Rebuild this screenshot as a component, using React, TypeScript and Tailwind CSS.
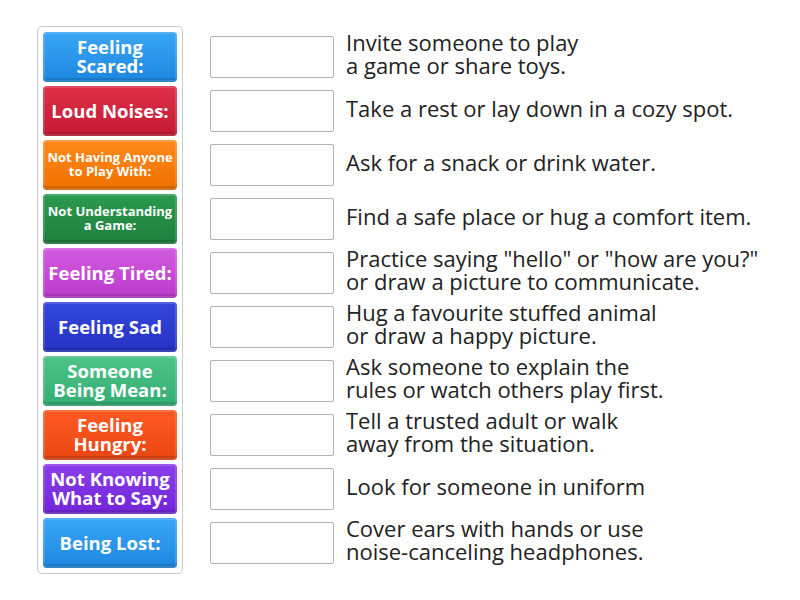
const items = [
  { label: ["Feeling", "Scared:"], size: "big", from: "#3aa6f5", to: "#1d87e0", text: ["Invite someone to play", "a game or share toys."] },
  { label: ["Loud Noises:"], size: "big", from: "#de3049", to: "#c41a33", text: ["Take a rest or lay down in a cozy spot."] },
  { label: ["Not Having Anyone", "to Play With:"], size: "small", from: "#ff8a1c", to: "#ef7000", text: ["Ask for a snack or drink water."] },
  { label: ["Not Understanding", "a Game:"], size: "small", from: "#2b9a4e", to: "#1d7f3d", text: ["Find a safe place or hug a comfort item."] },
  { label: ["Feeling Tired:"], size: "big", from: "#d25ce0", to: "#bb3acb", text: ["Practice saying \"hello\" or \"how are you?\"", "or draw a picture to communicate."] },
  { label: ["Feeling Sad"], size: "big", from: "#3547dc", to: "#2532c4", text: ["Hug a favourite stuffed animal", "or draw a happy picture."] },
  { label: ["Someone", "Being Mean:"], size: "big", from: "#4dc48a", to: "#33ad72", text: ["Ask someone to explain the", "rules or watch others play first."] },
  { label: ["Feeling", "Hungry:"], size: "big", from: "#ff5a24", to: "#e84612", text: ["Tell a trusted adult or walk", "away from the situation."] },
  { label: ["Not Knowing", "What to Say:"], size: "big", from: "#8b3eea", to: "#7225d8", text: ["Look for someone in uniform"] },
  { label: ["Being Lost:"], size: "big", from: "#3aa6f5", to: "#1d87e0", text: ["Cover ears with hands or use", "noise-canceling headphones."] },
];

function Tile({ item }: { item: (typeof items)[number] }) {
  return (
    <div
      className="h-[50px] w-[134px] rounded-[4px] flex flex-col items-center justify-center text-white font-bold text-center shadow-[inset_0_-4px_0_rgba(0,0,0,0.12),inset_0_0_0_2px_rgba(255,255,255,0.14)]"
      style={{ background: `linear-gradient(to bottom, ${item.from}, ${item.to})` }}
    >
      {item.label.map((l, i) => (
        <div
          key={i}
          className={item.size === "big" ? "text-[18.5px] leading-[21px] -mt-[2px]" : "text-[13px] leading-[15px] -mt-[1px] whitespace-nowrap"}
        >
          {l}
        </div>
      ))}
    </div>
  );
}

export default function App() {
  return (
    <div className="w-[800px] h-[600px] bg-white" style={{ fontFamily: '"Open Sans", "Liberation Sans", sans-serif' }}>
      <div className="flex pt-[26px] pl-[37px]">
        {/* draggable tiles */}
        <div className="border border-[#c8c8c8] rounded-[5px] p-[5px] flex flex-col gap-[4px]">
          {items.map((item, i) => (
            <Tile key={i} item={item} />
          ))}
        </div>

        {/* drop targets + answers */}
        <div className="flex flex-col gap-[4px] pt-[6px] pl-[27px]">
          {items.map((item, i) => (
            <div key={i} className="h-[50px] flex items-center">
              <div className="w-[124px] h-[42px] border border-[#b4b4b4] rounded-[2px] bg-white shrink-0" />
              <div className="ml-[12px] text-[22px] leading-[23px] text-[#222] -mt-[6px] whitespace-nowrap">
                {item.text.map((t, j) => (
                  <div key={j}>{t}</div>
                ))}
              </div>
            </div>
          ))}
        </div>
      </div>
    </div>
  );
}
